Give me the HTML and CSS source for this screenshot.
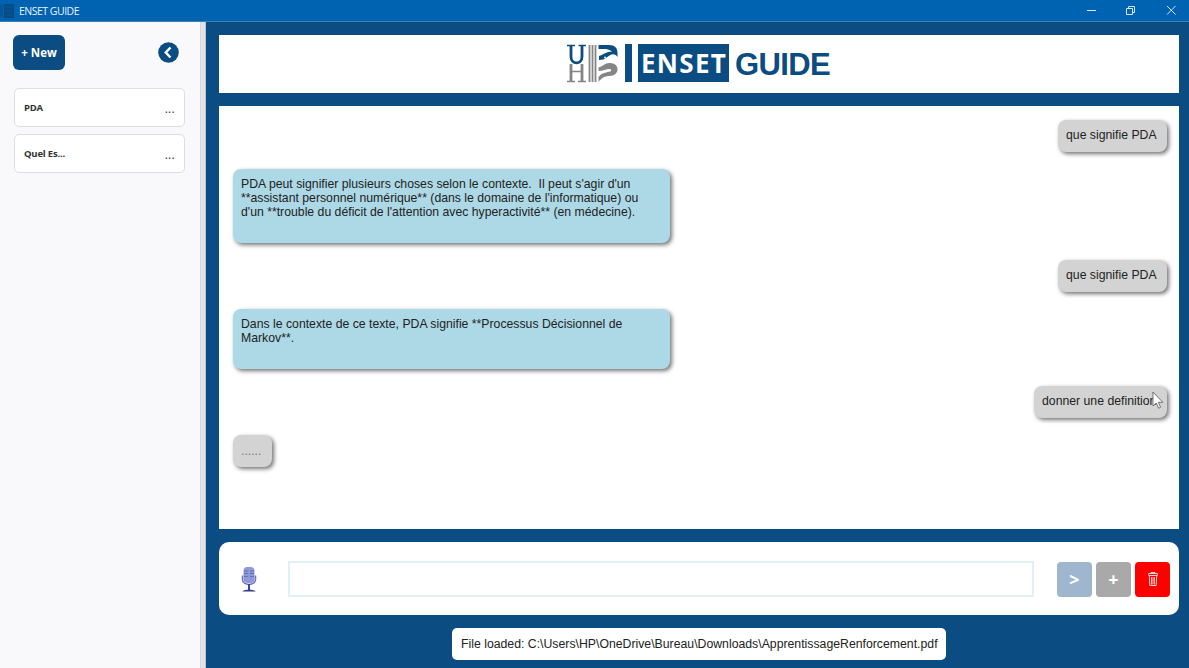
FILE: index.html
```html
<!DOCTYPE html>
<html lang="fr">
<head>
<meta charset="utf-8">
<title>ENSET GUIDE</title>
<link rel="stylesheet" href="styles.css">
</head>
<body>
<header class="titlebar">
  <svg class="app-icon" width="14" height="14" viewBox="0 0 14 14"><path d="M0 1h3v12H0z" fill="#0a5598"/><path d="M4 0h10v14H4z" fill="#0a4b83"/><path d="M6 3h6M6 7h5M6 11h6" stroke="#07589e"/></svg>
  <span class="app-name">ENSET GUIDE</span>
  <svg class="win-controls" width="92" height="12" viewBox="0 0 92 12" fill="none" stroke="#d5e6f5"><path d="M1 5.500h9"/><path d="M40.500 3.500h6v6h-6zM42.500 3.500v-2h6v6h-2"/><path d="M81 1l8.500 8.500M89.500 1L81 9.500"/></svg>
</header>
<div class="window">
  <aside class="sidebar">
    <div class="side-head">
      <button class="new-btn">+ New</button>
      <svg width="21" height="21" viewBox="0 0 21 21"><circle cx="10.500" cy="10.500" r="10.300" fill="#0b4c82"/><path d="M12.500 5.500L7.800 10.500l4.700 5" fill="none" stroke="#fff" stroke-width="2.500"/></svg>
    </div>
    <div class="chat-item"><span>PDA</span><span class="dots">...</span></div>
    <div class="chat-item"><span>Quel Es...</span><span class="dots">...</span></div>
  </aside>
  <main class="main">
    <div class="banner">
      <svg class="crest" width="51" height="39" viewBox="0 0 51 39">
        <g fill="none" stroke="#0b4c82"><path d="M4 1.500v11c0 8.500 11 8.500 11 0v-11" stroke-width="2.800"/><path d="M0 1.500h8M11.500 1.500h7.500" stroke-width="1.600"/></g>
        <g fill="none" stroke="#858585"><path d="M4 20v17M15 20v17" stroke-width="2.800"/><path d="M0 37.500h8M11 37.500h8M4 27.500h12" stroke-width="1.500"/><path d="M22.500 1v37M25.500 1v37M28.500 1v37" stroke-width="1.800"/></g>
        <path d="M31.500 1H42c6 0 8.500 3 8.500 8v4c-2-3-5-3.500-8-1.500l-6 4-4.500.5v-4c4-1 6-4 13-4.500-3-3-7-2.500-13.500-2.500z" fill="#0b4c82"/>
        <path d="M31.500 23.500c4-1 6-4.500 11-4.500 4 0 8 2 8 6s-3 7-8 7c-5 0-8 2-11 6v-5c3-4 7-4.500 12-5.500 1-1 1-2-.5-2.500-4 0-7 2-11.500 2z" fill="#858585"/>
        <circle cx="38" cy="13.500" r=".9" fill="#fff"/>
      </svg>
      <span class="bar"></span>
      <span class="enset">ENSET</span>
      <span class="guide">GUIDE</span>
    </div>
    <section class="chat">
      <div class="bubble user">que signifie PDA</div>
      <div class="bubble bot">PDA peut signifier plusieurs choses selon le contexte.&nbsp; Il peut s'agir d'un<br>**assistant personnel numérique** (dans le domaine de l'informatique) ou<br>d'un **trouble du déficit de l'attention avec hyperactivité** (en médecine).</div>
      <div class="bubble user">que signifie PDA</div>
      <div class="bubble bot">Dans le contexte de ce texte, PDA signifie **Processus Décisionnel de<br>Markov**.</div>
      <div class="bubble user last">donner une definition
        <svg class="cursor" width="12" height="19" viewBox="0 0 12 19"><path d="M1 1v14l3.300-3 2.300 5.200 2-.9-2.300-5h4.500z" fill="#fff" stroke="#555" stroke-width=".8"/></svg>
      </div>
      <div class="bubble pending">......</div>
    </section>
    <div class="composer">
      <svg class="mic" width="16" height="26" viewBox="0 0 16 26">
        <rect x="2.500" y="1" width="11" height="16" rx="4" fill="#8e98d6"/>
        <path d="M3 5h4M9 5h4M3 7.500h4M9 7.500h4M3 10.500h4M9 10.500h4" stroke="#5967b5" stroke-width=".8"/>
        <path d="M1.500 9.500v4c0 6.500 13 6.500 13 0v-4" fill="none" stroke="#6a75c0" stroke-width="1.500"/><path d="M8 18v6" stroke="#39459b" stroke-width="2"/><path d="M1.500 25.500c0-2.500 13-2.500 13 0z" fill="#303b91"/>
      </svg>
      <input class="prompt" type="text" aria-label="Message">
      <div class="actions">
        <button class="act send">&gt;</button>
        <button class="act add">+</button>
        <button class="act del" aria-label="Supprimer"><svg width="10" height="14" viewBox="0 0 10 14" fill="none" stroke="#fff" stroke-width=".8"><path d="M.7 3.500V1.500h8.600v2zM3 1.500V.5h4v1M1.300 3.500l.5 10h6.400l.5-10M3.500 5v7.500M5 5v7.500M6.500 5v7.500"/></svg></button>
      </div>
    </div>
    <div class="file-status">File loaded: C:\Users\HP\OneDrive\Bureau\Downloads\ApprentissageRenforcement.pdf</div>
  </main>
</div>
</body>
</html>
```
FILE: styles.css
```css
* { box-sizing: border-box; }
body { margin: 0; width: 1189px; height: 668px; overflow: hidden; display: flex; flex-direction: column; font-family: "Liberation Sans", Arial, sans-serif; color: #222; }
button { border: 0; padding: 0; font: inherit; }
svg { display: block; flex: none; }
.titlebar { height: 22px; flex: none; display: flex; align-items: center; background: #0063b1; border-bottom: 1px solid #3c7fb3; color: #e8f2fb; font: 10.5px "Open Sans", sans-serif; }
.app-name { margin-left: 5px; letter-spacing: -.5px; }
.win-controls { margin-left: auto; margin-right: 11px; }
.window { flex: 1; display: flex; min-height: 0; }
.sidebar { width: 206px; flex: none; padding: 13px 16px 0 14px; background: #f9f9fb; box-shadow: inset -1px 0 #b9c4cf, inset -5px 0 #e1e3e6, inset -6px 0 #d5d7da; font-family: "Open Sans", sans-serif; font-weight: 700; }
.side-head { display: flex; align-items: center; justify-content: space-between; height: 35px; margin: 0 11px 18px -1px; }
.new-btn { width: 52px; height: 35px; border-radius: 6px; background: #0b4c82; color: #fff; font-size: 11.5px; }
.chat-item { width: 171px; height: 39px; margin-bottom: 7px; padding: 0 9px; display: flex; align-items: center; justify-content: space-between; background: #fff; border: 1px solid #dedee0; border-radius: 5px; font-size: 9.5px; letter-spacing: -.2px; color: #333; }
.dots { font-weight: 400; font-size: 12px; letter-spacing: .3px; padding-top: 2px; }
.main { flex: 1; min-width: 0; padding: 13px 10px 0 13px; background: #0b4c82; display: flex; flex-direction: column; }
.banner { height: 58px; flex: none; background: #fff; display: flex; align-items: center; padding: 0 0 2px 348px; }
.bar { width: 7px; height: 38px; margin-left: 7px; background: #0b4c82; }
.enset { width: 91px; height: 38px; margin: 0 6px; padding-left: 3px; background: #0b4c82; color: #fff; font: 700 26px/38px "Open Sans", sans-serif; letter-spacing: 1.3px; white-space: nowrap; }
.guide { padding-top: 3px; color: #0b4c82; font-size: 31px; font-weight: 700; letter-spacing: -.6px; }
.chat { height: 423px; flex: none; margin-top: 13px; padding: 14px 12px 0 14px; background: #fff; display: flex; flex-direction: column; gap: 17px; }
.bubble { padding: 8px; border-radius: 8px; font-size: 12.25px; line-height: 14px; white-space: nowrap; box-shadow: 2px 2px 4px rgba(0,0,0,.55); }
.user { align-self: flex-end; height: 32px; line-height: 15px; width: 109px; background: #d3d3d3; }
.last { width: 133px; position: relative; }
.cursor { position: absolute; left: 118px; top: 5px; }
.bot { width: 437px; height: 74px; background: #add8e6; }
.user + .bot ~ .bot { height: 60px; }
.pending { width: 39px; height: 32px; line-height: 16px; background: #d3d3d3; color: #777; }
.composer { height: 73px; flex: none; margin-top: 13px; padding: 1px 9px 0 22px; display: flex; align-items: center; background: #fff; border-radius: 10px; }
.prompt { width: 746px; height: 36px; margin-left: 31px; border: 2px solid #e0f1f5; outline: 0; background: #fff; }
.actions { margin-left: auto; display: flex; gap: 4px; }
.act { width: 35px; height: 35px; border-radius: 4px; display: grid; place-items: center; color: #fff; font: 700 18px "Open Sans", sans-serif; }
.send { background: #9eb7cf; }
.add { background: #a9a9a9; }
.del { background: #f00; }
.file-status { align-self: center; width: 494px; height: 32px; flex: none; margin-top: 13px; padding: 0 9px; border-radius: 5px; background: #fff; font-size: 12.27px; line-height: 32px; white-space: nowrap; }
```
